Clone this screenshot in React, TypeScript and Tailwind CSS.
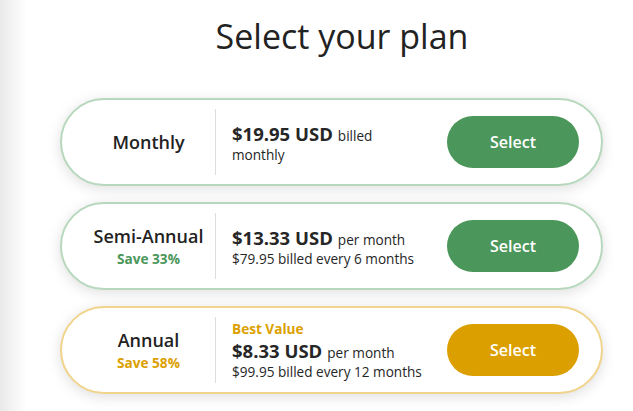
import React from "react";

type Plan = {
  name: string;
  save?: string;
  badge?: string;
  price: string;
  unit: string;
  sub?: string;
  gold?: boolean;
};

const plans: Plan[] = [
  { name: "Monthly", price: "$19.95 USD", unit: "billed", sub: "monthly" },
  { name: "Semi-Annual", save: "Save 33%", price: "$13.33 USD", unit: "per month", sub: "$79.95 billed every 6 months" },
  { name: "Annual", save: "Save 58%", badge: "Best Value", price: "$8.33 USD", unit: "per month", sub: "$99.95 billed every 12 months", gold: true },
];

function PlanCard({ p }: { p: Plan }) {
  return (
    <div
      className={
        "flex items-center h-[88px] rounded-full bg-white border-2 shadow-[0_3px_14px_rgba(0,0,0,0.13)] " +
        (p.gold ? "border-[#f1d48c]" : "border-[#b7d8bd]")
      }
    >
      <div className="ml-[20px] w-[133px] flex flex-col items-center">
        <div className="text-[18px] leading-[25px] font-semibold text-[#232323]">{p.name}</div>
        {p.save && (
          <div
            className={
              "text-[13.6px] leading-[19px] font-bold " + (p.gold ? "text-[#dc9f00]" : "text-[#4b965a]")
            }
          >
            {p.save}
          </div>
        )}
      </div>
      <div className="w-px h-[66px] bg-[#dddddd]" />
      <div className="ml-[16px] w-[191px] text-[#262626]">
        {p.badge && (
          <div className="text-[13.6px] leading-[19px] font-bold text-[#dc9f00]">{p.badge}</div>
        )}
        <div className="flex items-baseline gap-[5px] text-[13.6px] leading-[19px]">
          <span className="text-[18.5px] leading-[25px] font-bold">{p.price}</span>
          <span>{p.unit}</span>
        </div>
        {p.sub && <div className="text-[13.6px] leading-[18px]">{p.sub}</div>}
      </div>
      <div className="flex-1" />
      <button
        className={
          "mr-[22px] w-[132px] h-[52px] rounded-full text-white text-[16px] font-semibold " +
          (p.gold ? "bg-[#dc9f00]" : "bg-[#4b965a]")
        }
      >
        Select
      </button>
    </div>
  );
}

export default function App() {
  return (
    <div
      className="flex w-[633px] h-[411px] bg-white overflow-hidden"
      style={{ fontFamily: '"Open Sans", "Noto Sans", sans-serif' }}
    >
      <div className="w-[26px] h-full bg-gradient-to-r from-[#e9e9e9] to-white" />
      <div className="ml-[34px] w-[543px] flex flex-col">
        <h1 className="pt-[16px] pl-[21px] text-center text-[34px] leading-[40px] font-medium text-[#222222]">
          Select your plan
        </h1>
        <div className="mt-[42px] flex flex-col gap-[16px]">
          {plans.map((p) => (
            <PlanCard key={p.name} p={p} />
          ))}
        </div>
      </div>
    </div>
  );
}
